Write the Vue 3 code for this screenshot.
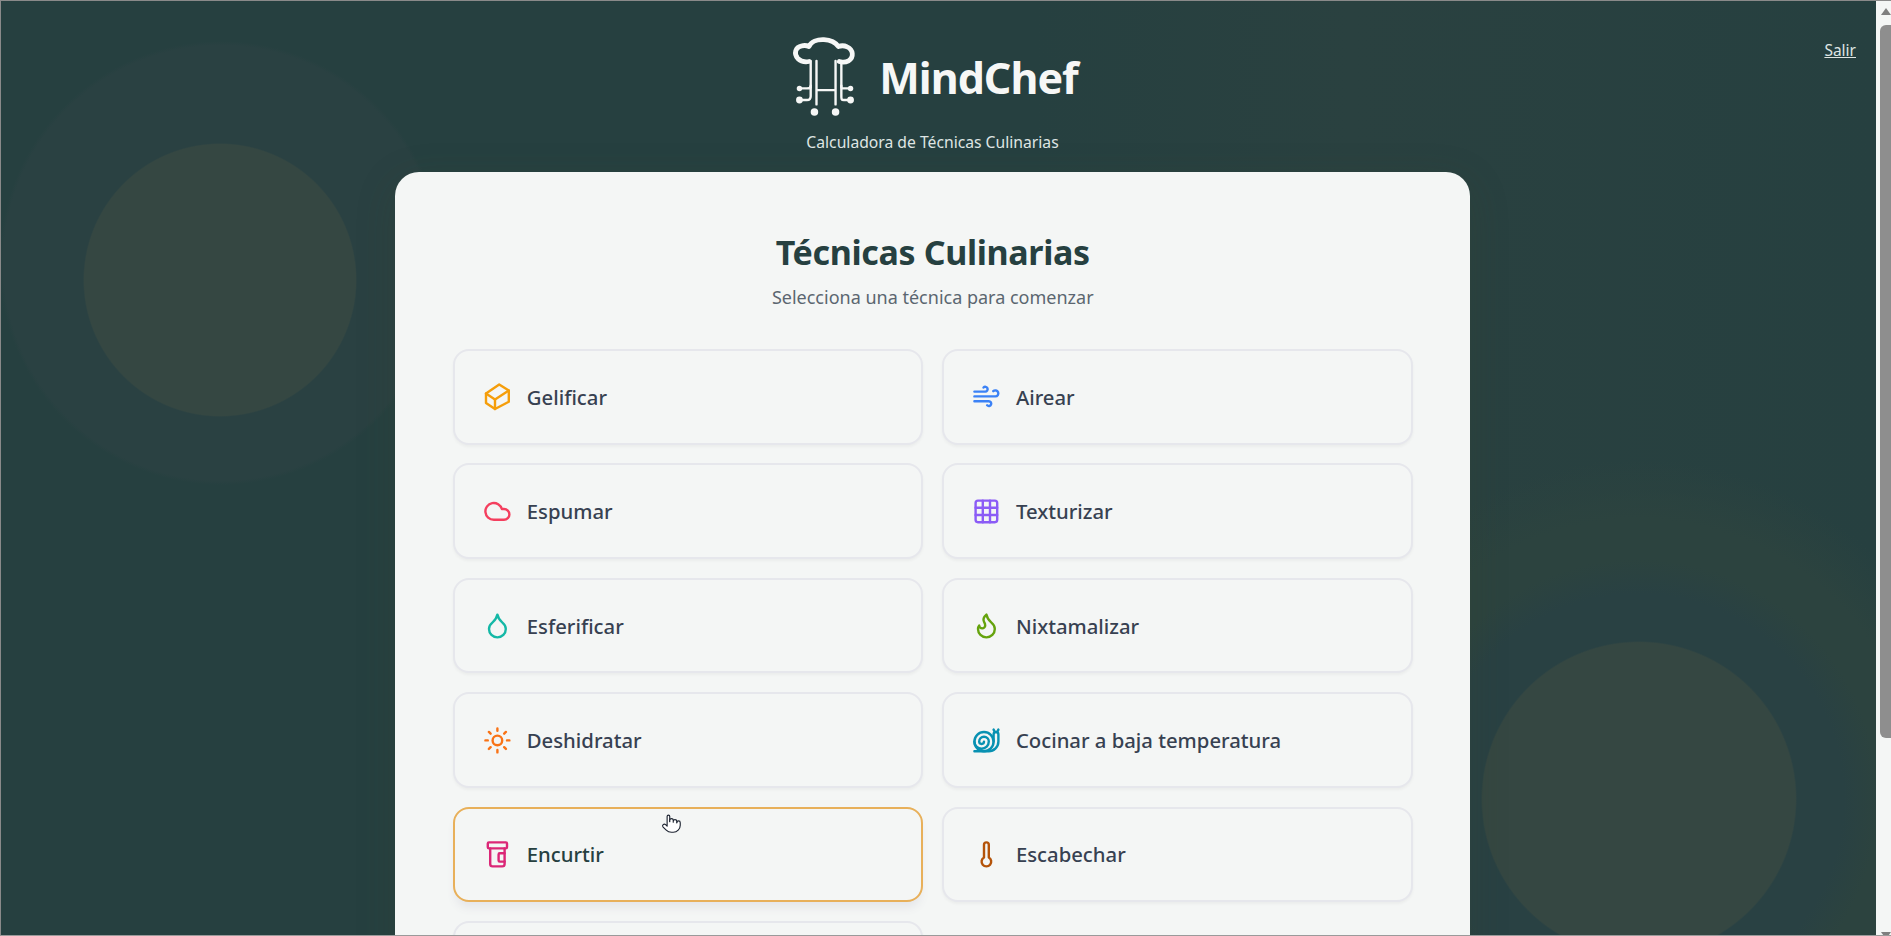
<template>
  <div class="window">
    <main class="page">
      <header class="top">
        <div></div>
        <div class="brand">
          <div class="brand-row">
            <svg class="logo" viewBox="98 52 198 232" fill="none" stroke="#f6f7f6" stroke-linecap="round" stroke-linejoin="round">
              <path stroke-width="14" d="M150 124c-12 2-24 0-33-9-12-13-8-33 12-37 8-2 15-1 21 2 6-14 24-21 44-20 20 1 34 8 42 20 8-3 18-3 26 1 18 8 21 31 4 41-9 5-18 5-27 2" />
              <path stroke-width="7" d="M155 122v78M172 122v128M228 122v128M245 122v78M172 208h56" />
              <path stroke-width="7" d="M122 203h22c7 0 11-1 11-8M122 237h22c7 0 11-3 11-11v-26M272 203h-20c-7 0-7-1-7-8M272 237h-20c-7 0-7-3-7-11v-26" />
              <circle cx="122" cy="203" r="8" fill="#f6f7f6" stroke="none" />
              <circle cx="122" cy="237" r="10" fill="#f6f7f6" stroke="none" />
              <circle cx="272" cy="203" r="8" fill="#f6f7f6" stroke="none" />
              <circle cx="272" cy="237" r="10" fill="#f6f7f6" stroke="none" />
              <circle cx="166" cy="272" r="11" fill="#f6f7f6" stroke="none" />
              <circle cx="228" cy="272" r="11" fill="#f6f7f6" stroke="none" />
            </svg>
            <h1>MindChef</h1>
          </div>
          <p class="tagline">Calculadora de Técnicas Culinarias</p>
        </div>
        <a class="logout" href="#">Salir</a>
      </header>

      <section class="card">
        <h2>Técnicas Culinarias</h2>
        <p class="lead">Selecciona una técnica para comenzar</p>
        <div class="grid">
          <button
            v-for="t in techniques"
            :key="t.name"
            class="item"
            :class="{ hover: t.name === 'Encurtir' }"
          >
            <svg class="icon" viewBox="0 0 24 24" fill="none" :stroke="t.color" stroke-width="2" stroke-linecap="round" stroke-linejoin="round">
              <path v-for="d in t.paths" :key="d" :d="d" />
            </svg>
            <span>{{ t.name }}</span>
            <svg v-if="t.name === 'Encurtir'" class="cursor" viewBox="0 0 24 24" fill="#fff" stroke="#1c2330" stroke-width="1.3" stroke-linecap="round" stroke-linejoin="round">
              <path d="M18 11a2 2 0 1 1 4 0v3a8 8 0 0 1-8 8h-2c-2.8 0-4.5-.86-5.99-2.34l-3.6-3.6a2 2 0 0 1 2.83-2.82L7 15V4a1.5 1.5 0 0 1 3 0v5.5" />
              <path d="M10 10V8.5a1.7 1.7 0 0 1 4 0V10M14 10.5v-1a1.8 1.8 0 0 1 4 0v1.5" />
            </svg>
          </button>
          <div class="item"></div>
        </div>
      </section>
    </main>

    <div class="scrollbar">
      <span class="arrow up"></span>
      <span class="thumb"></span>
      <span class="arrow down"></span>
    </div>
  </div>
</template>

<script setup>
const techniques = [
  { name: 'Gelificar', color: '#f59e0b', paths: ['M13.5 2 21.5 7v9.5L10 22.5l-7.5-5v-8Z', 'M2.5 9.5 10 14.5 21.5 7', 'M10 14.5v8'] },
  { name: 'Airear', color: '#3b82f6', paths: ['M17.7 7.7a2.5 2.5 0 1 1 1.8 4.3H2', 'M9.6 4.6A2 2 0 1 1 11 8H2', 'M12.6 19.4A2 2 0 1 0 14 16H2'] },
  { name: 'Espumar', color: '#f43f5e', paths: ['M17.5 19H9a7 7 0 1 1 6.71-9h1.79a4.5 4.5 0 1 1 0 9Z'] },
  { name: 'Texturizar', color: '#8b5cf6', paths: ['M5 3h14a2 2 0 0 1 2 2v14a2 2 0 0 1-2 2H5a2 2 0 0 1-2-2V5a2 2 0 0 1 2-2Z', 'M3 9h18M3 15h18M9 3v18M15 3v18'] },
  { name: 'Esferificar', color: '#14b8a6', paths: ['M12 22a7 7 0 0 0 7-7c0-2-1-3.9-3-5.5s-3.5-4-4-6.5c-.5 2.5-2 4.9-4 6.5C6 11.1 5 13 5 15a7 7 0 0 0 7 7z'] },
  { name: 'Nixtamalizar', color: '#65a30d', paths: ['M8.5 14.5A2.5 2.5 0 0 0 11 12c0-1.38-.5-2-1-3-1.072-2.143-.224-4.054 2-6 .5 2.5 2 4.9 4 6.5 2 1.6 3 3.5 3 5.5a7 7 0 1 1-14 0c0-1.153.433-2.294 1-3a2.5 2.5 0 0 0 2.5 2.5z'] },
  { name: 'Deshidratar', color: '#f97316', paths: ['M16 12a4 4 0 1 1-8 0 4 4 0 0 1 8 0Z', 'M12 2v2M12 20v2M4.93 4.93l1.41 1.41M17.66 17.66l1.41 1.41M2 12h2M20 12h2M6.34 17.66l-1.41 1.41M19.07 4.93l-1.41 1.41'] },
  { name: 'Cocinar a baja temperatura', color: '#0891b2', paths: ['M2 13a6 6 0 1 0 12 0 4 4 0 1 0-8 0 2 2 0 0 0 4 0', 'M18 13a8 8 0 1 1-16 0 8 8 0 0 1 16 0Z', 'M2 21h12c4.4 0 8-3.6 8-8V7a2 2 0 1 0-4 0v6', 'M18 3 19.1 5.2', 'M22 3 20.9 5.2'] },
  { name: 'Encurtir', color: '#db2777', paths: ['M18 11h-4a1 1 0 0 0-1 1v5a1 1 0 0 0 1 1h4', 'M6 7v13a2 2 0 0 0 2 2h8a2 2 0 0 0 2-2V7', 'M5 2h14a1 1 0 0 1 1 1v3a1 1 0 0 1-1 1H5a1 1 0 0 1-1-1V3a1 1 0 0 1 1-1Z'] },
  { name: 'Escabechar', color: '#b45309', paths: ['M14 4v10.54a4 4 0 1 1-4 0V4a2 2 0 0 1 4 0Z'] }
]
</script>

<style>
html, body { margin: 0; height: 100%; overflow: hidden; }
</style>

<style scoped>
.window {
  display: flex;
  width: 1891px;
  height: 936px;
  box-sizing: border-box;
  overflow: hidden;
  border-top: 1px solid #8a8a8a;
  border-left: 1px solid #8a8a8a;
  border-bottom: 1px solid #9a9a9a;
  font-family: "Noto Sans", "Open Sans", sans-serif;
  background: #f4f6f5;
}
.page {
  flex: 1;
  min-width: 0;
  background:
    radial-gradient(circle 137px at 219px 279px, #354742 99%, transparent 100%),
    radial-gradient(circle 158px at 1638px 798px, #354742 99%, transparent 100%),
    radial-gradient(circle 222px at 220px 262px, #2a4142 98%, transparent 100%),
    radial-gradient(circle 340px at 1637px 798px, #294143 0, #294143 205px, #2c433f 240px, #2c433f 280px, rgba(44, 67, 63, 0) 340px),
    linear-gradient(90deg, #264040 55%, #2a4140 72%, #264040 100%);
}
.top {
  display: grid;
  grid-template-columns: 1fr auto 1fr;
  height: 171px;
  padding: 0 20px 0 12px;
  box-sizing: border-box;
}
.brand { grid-column: 2; display: flex; flex-direction: column; align-items: center; }
.brand-row { display: flex; align-items: center; gap: 20px; padding-top: 36px; height: 79px; }
.logo { width: 68px; height: 79px; flex: none; }
h1 { margin: 2px 0 0; color: #f6f7f6; font-size: 43px; font-weight: 700; line-height: 1; letter-spacing: -1px; }
.tagline { margin: 15px 4px 0 0; color: #dfe5e3; font-size: 15.7px; line-height: 22px; }
.logout {
  justify-self: end;
  align-self: start;
  margin-top: 38px;
  color: #dfe5e3;
  font-size: 15.5px;
  line-height: 22px;
  text-decoration: underline;
}
.card {
  width: 1075px;
  box-sizing: border-box;
  margin-left: 394px;
  padding: 57px 57.5px 0 58px;
  min-height: 900px;
  background: #f4f6f5;
  border-radius: 24px;
  box-shadow: 0 10px 40px rgba(60, 70, 40, 0.18);
}
h2 { margin: 0; text-align: center; color: #264040; font-size: 34px; font-weight: 700; line-height: 46px; letter-spacing: -0.35px; }
.lead { margin: 9px 0 0; text-align: center; color: #5b6670; font-size: 18px; line-height: 26px; }
.grid {
  display: grid;
  grid-template-columns: 1fr 1fr;
  gap: 18.8px;
  margin-top: 39px;
}
.item {
  position: relative;
  display: flex;
  align-items: center;
  gap: 15px;
  height: 95.6px;
  box-sizing: border-box;
  padding: 0 28px;
  background: #f4f6f5;
  border: 2px solid #e6e7ec;
  border-radius: 16px;
  font-family: inherit;
  font-size: 20.3px;
  font-weight: 500;
  color: #374151;
  text-align: left;
  box-shadow: 0 2px 3px rgba(0, 0, 0, 0.04);
}
.item.hover {
  border-color: #e8b05a;
  color: #264040;
  box-shadow: 0 8px 8px -2px #e6e7ea;
}
.icon { width: 28.8px; height: 28.8px; flex: none; }
.cursor { position: absolute; left: 206px; top: 3px; width: 21px; height: 23px; }
.scrollbar {
  width: 15px;
  flex: none;
  display: flex;
  flex-direction: column;
  align-items: flex-end;
  background: #f4f6f5;
  overflow: hidden;
}
.arrow { width: 0; height: 0; border-left: 5px solid transparent; border-right: 5px solid transparent; }
.arrow.up { border-bottom: 7px solid #7f7f7f; margin-top: 7px; }
.arrow.down { border-top: 7px solid #7f7f7f; margin-top: auto; margin-bottom: -4px; }
.thumb { width: 11px; height: 713px; margin-top: 10px; background: #8e8e8e; border-radius: 6px 0 0 6px; }
</style>
